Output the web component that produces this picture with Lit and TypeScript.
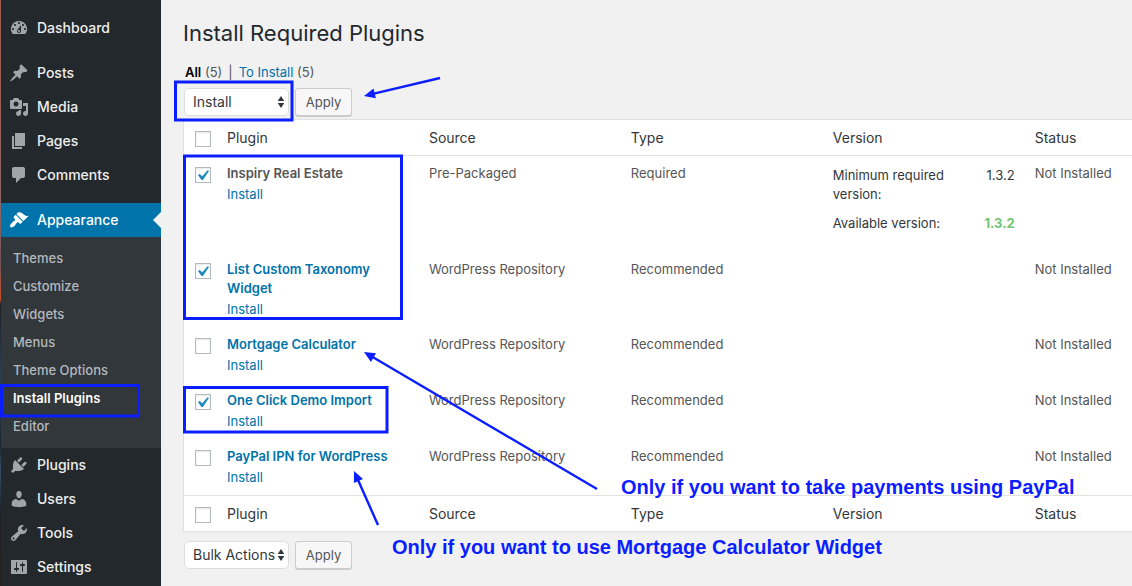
import { LitElement, html, css, svg, nothing } from "lit";
import { customElement, property } from "lit/decorators.js";

const ICONS: Record<string, string> = {
  dashboard:
    "M3.76 16h12.48A7.998 7.998 0 0 0 10 3a7.998 7.998 0 0 0-6.24 13zM10 4c.55 0 1 .45 1 1s-.45 1-1 1-1-.45-1-1 .45-1 1-1zM6 6c.55 0 1 .45 1 1s-.45 1-1 1-1-.45-1-1 .45-1 1-1zm8 0c.55 0 1 .45 1 1s-.45 1-1 1-1-.45-1-1 .45-1 1-1zm-5.37 5.55L12 7v6c0 1.1-.9 2-2 2s-2-.9-2-2c0-.57.24-1.08.63-1.45zM4 10c.55 0 1 .45 1 1s-.45 1-1 1-1-.45-1-1 .45-1 1-1zm12 0c.55 0 1 .45 1 1s-.45 1-1 1-1-.45-1-1 .45-1 1-1zm-5 3c0-.55-.45-1-1-1s-1 .45-1 1 .45 1 1 1 1-.45 1-1z",
  post: "M10.44 3.02l1.82-1.82 6.36 6.35-1.83 1.82c-1.05-.68-2.48-.57-3.41.36l-.75.75c-.92.93-1.04 2.35-.35 3.41l-1.83 1.82-2.41-2.41-2.8 2.79c-.42.42-3.38 2.71-3.8 2.29s1.86-3.39 2.28-3.81l2.79-2.79L4.1 9.36l1.83-1.82c1.05.69 2.48.57 3.4-.36l.75-.75c.93-.92 1.05-2.35.36-3.41z",
  media:
    "M13 11V4c0-.55-.45-1-1-1h-1.67L9 1H5L3.67 3H2c-.55 0-1 .45-1 1v7c0 .55.45 1 1 1h10c.55 0 1-.45 1-1zM7 4.5c1.38 0 2.5 1.12 2.5 2.5S8.38 9.5 7 9.5 4.5 8.38 4.5 7 5.62 4.5 7 4.5zM14 6h5v10.5c0 1.38-1.12 2.5-2.5 2.5S14 17.88 14 16.5s1.12-2.5 2.5-2.5c.17 0 .34.02.5.05V9h-3V6zm-4 8.05V13h2v3.5c0 1.38-1.12 2.5-2.5 2.5S7 17.88 7 16.5 8.12 14 9.5 14c.17 0 .34.02.5.05z",
  page: "M6 15V2h10v13H6zm-1 1h8v2H3V5h2v11z",
  comment:
    "M5 2h9c1.1 0 2 .9 2 2v7c0 1.1-.9 2-2 2h-2l-5 5v-5H5c-1.1 0-2-.9-2-2V4c0-1.1.9-2 2-2z",
  appearance:
    "M14.48 11.06L7.41 3.99l1.5-1.5c.5-.56 2.3-.47 3.51.32 1.21.8 1.43 1.28 2.91 2.1 1.18.64 2.45 1.26 4.45.85zm-.71.71L6.7 4.7 4.93 6.47c-.39.39-.39 1.02 0 1.41l1.06 1.06c.39.39.39 1.03 0 1.42-.6.6-1.43 1.11-2.21 1.69-.35.26-.7.53-1.01.84C1.43 14.23.4 16.08 1.4 17.07c.99 1 2.84-.03 4.18-1.36.31-.31.58-.66.85-1.02.57-.78 1.08-1.61 1.69-2.21.39-.39 1.02-.39 1.41 0l1.06 1.06c.39.39 1.02.39 1.41 0z",
  plugin:
    "M13.11 4.36L9.87 7.6 8 5.73l3.24-3.24c.35-.34 1.05-.2 1.56.32.52.51.66 1.21.31 1.55zm-8 1.77l.91-1.12 9.01 9.01-1.19.84c-.71.71-2.63 1.16-3.82 1.16H6.14L4.9 17.26c-.59.59-1.54.59-2.12 0-.59-.58-.59-1.53 0-2.12l1.24-1.24v-3.88c0-1.13.4-3.19 1.09-3.89zm7.26 3.97l3.24-3.24c.34-.35 1.04-.21 1.55.31.52.51.66 1.21.31 1.55l-3.24 3.25z",
  user: "M10 9.25c-2.27 0-2.73-3.44-2.73-3.44C7 4.02 7.82 2 9.97 2c2.16 0 2.98 2.02 2.71 3.81 0 0-.41 3.44-2.68 3.44zm0 2.57L12.72 10c2.39 0 4.52 2.33 4.52 4.53v2.49s-3.65 1.13-7.24 1.13c-3.65 0-7.24-1.13-7.24-1.13v-2.49c0-2.25 1.94-4.48 4.47-4.48z",
  tools:
    "M16.68 9.77c-1.34 1.34-3.3 1.67-4.95.99l-5.41 6.52c-.99.99-2.59.99-3.58 0s-.99-2.59 0-3.57l6.52-5.42c-.68-1.65-.35-3.61.99-4.95 1.28-1.28 3.12-1.62 4.72-1.06l-2.89 2.89 2.82 2.82 2.86-2.87c.53 1.58.18 3.39-1.08 4.65zM3.81 16.21c.4.39 1.04.39 1.43 0 .4-.4.4-1.04 0-1.43-.39-.4-1.03-.4-1.43 0-.39.39-.39 1.03 0 1.43z",
  settings:
    "M18 16V4c0-.55-.45-1-1-1H3c-.55 0-1 .45-1 1v12c0 .55.45 1 1 1h14c.55 0 1-.45 1-1zM8 11h1c.55 0 1 .45 1 1s-.45 1-1 1H8v1.5c0 .28-.22.5-.5.5s-.5-.22-.5-.5V13H6c-.55 0-1-.45-1-1s.45-1 1-1h1V5.5c0-.28.22-.5.5-.5s.5.22.5.5V11zm5-2h-1c-.55 0-1-.45-1-1s.45-1 1-1h1V5.5c0-.28.22-.5.5-.5s.5.22.5.5V7h1c.55 0 1 .45 1 1s-.45 1-1 1h-1v5.5c0 .28-.22.5-.5.5s-.5-.22-.5-.5V9z",
};

interface MenuItem {
  icon: string;
  label: string;
  current?: boolean;
  children?: string[];
}

const MENU: MenuItem[][] = [
  [{ icon: "dashboard", label: "Dashboard" }],
  [
    { icon: "post", label: "Posts" },
    { icon: "media", label: "Media" },
    { icon: "page", label: "Pages" },
    { icon: "comment", label: "Comments" },
  ],
  [
    {
      icon: "appearance",
      label: "Appearance",
      current: true,
      children: ["Themes", "Customize", "Widgets", "Menus", "Theme Options", "Install Plugins", "Editor"],
    },
    { icon: "plugin", label: "Plugins" },
    { icon: "user", label: "Users" },
    { icon: "tools", label: "Tools" },
    { icon: "settings", label: "Settings" },
  ],
];

const ACTIVE_CHILD = "Install Plugins";

interface Plugin {
  name: string;
  linked: boolean;
  checked: boolean;
  source: string;
  type: string;
  minimum?: string;
  available?: string;
  status: string;
}

const PLUGINS: Plugin[] = [
  {
    name: "Inspiry Real Estate",
    linked: false,
    checked: true,
    source: "Pre-Packaged",
    type: "Required",
    minimum: "1.3.2",
    available: "1.3.2",
    status: "Not Installed",
  },
  { name: "List Custom Taxonomy Widget", linked: true, checked: true, source: "WordPress Repository", type: "Recommended", status: "Not Installed" },
  { name: "Mortgage Calculator", linked: true, checked: false, source: "WordPress Repository", type: "Recommended", status: "Not Installed" },
  { name: "One Click Demo Import", linked: true, checked: true, source: "WordPress Repository", type: "Recommended", status: "Not Installed" },
  { name: "PayPal IPN for WordPress", linked: true, checked: false, source: "WordPress Repository", type: "Recommended", status: "Not Installed" },
];

@customElement("admin-menu")
export class AdminMenu extends LitElement {
  static styles = css`
    :host {
      display: block;
      background: #23282d;
    }
    .menu {
      display: flex;
      flex-direction: column;
      gap: 11px;
      padding-top: 11px;
    }
    .list {
      list-style: none;
      margin: 0;
      padding: 0;
    }
    .link {
      display: flex;
      align-items: center;
      gap: 8px;
      height: 34px;
      padding-left: 8px;
      color: #eee;
      font-size: 14px;
      font-weight: 500;
      line-height: 18px;
      text-decoration: none;
    }
    .icon {
      width: 20px;
      height: 20px;
      fill: #a0a5aa;
    }
    .current {
      position: relative;
      background: #0073aa;
      color: #fff;
    }
    .current .icon {
      fill: #fff;
    }
    .current::after {
      content: "";
      position: absolute;
      right: 0;
      top: 9px;
      border: 8px solid transparent;
      border-left-width: 0;
      border-right-color: #f1f1f1;
    }
    .submenu {
      list-style: none;
      margin: 0;
      padding: 7px 0 8px;
      background: #32373c;
    }
    .sublink {
      display: block;
      padding-left: 12px;
      line-height: 28px;
      color: #b4b9be;
      font-size: 13px;
      font-weight: 500;
      text-decoration: none;
    }
    .active {
      color: #fff;
      font-weight: 600;
    }
  `;

  private item(m: MenuItem) {
    return html`<li>
      <a class="link ${m.current ? "current" : ""}" href="#">
        <svg class="icon" viewBox="0 0 20 20" aria-hidden="true"><path fill-rule="evenodd" d=${ICONS[m.icon]}></path></svg>
        <span>${m.label}</span>
      </a>
      ${m.children
        ? html`<ul class="submenu">
            ${m.children.map(
              (c) => html`<li><a class="sublink ${c === ACTIVE_CHILD ? "active" : ""}" href="#">${c}</a></li>`
            )}
          </ul>`
        : nothing}
    </li>`;
  }

  render() {
    return html`<nav class="menu" aria-label="Main menu">
      ${MENU.map((group) => html`<ul class="list">${group.map((m) => this.item(m))}</ul>`)}
    </nav>`;
  }
}

@customElement("bulk-actions")
export class BulkActions extends LitElement {
  @property() selected = "Bulk Actions";

  static styles = css`
    :host {
      display: block;
    }
    .bar {
      display: flex;
      gap: 6px;
    }
    .field {
      display: grid;
      align-items: center;
    }
    .select {
      grid-area: 1 / 1;
      appearance: none;
      width: 105px;
      height: 28px;
      margin: 0;
      padding: 0 8px 2px;
      border: 1px solid #ddd;
      border-radius: 5px;
      background: #fff;
      color: #32373c;
      font: 14px Inter, "Liberation Sans", sans-serif;
    }
    .arrows {
      grid-area: 1 / 1;
      justify-self: end;
      width: 8px;
      height: 12px;
      margin-right: 4px;
      fill: #32373c;
      pointer-events: none;
    }
    .apply {
      height: 28px;
      width: 57px;
      margin: 0;
      padding: 0;
      border: 1px solid #ccc;
      border-radius: 3px;
      background: #f7f7f7;
      box-shadow: 0 1px 0 #ccc;
      color: #555;
      font: 13px Inter, "Liberation Sans", sans-serif;
    }
  `;

  render() {
    return html`<div class="bar">
      <div class="field">
        <select class="select" aria-label="Select bulk action">
          ${["Bulk Actions", "Install"].map(
            (o) => html`<option ?selected=${o === this.selected}>${o}</option>`
          )}
        </select>
        <svg class="arrows" viewBox="0 0 8 12" aria-hidden="true"><path d="M4 0l3.3 5H.7zM4 12L.7 7h6.6z"></path></svg>
      </div>
      <button class="apply" type="button">Apply</button>
    </div>`;
  }
}

@customElement("plugin-table")
export class PluginTable extends LitElement {
  static styles = css`
    :host {
      display: block;
    }
    .table {
      width: 100%;
      table-layout: fixed;
      border-spacing: 0;
      border: 1px solid #e1e1e1;
      border-right: 0;
      background: #fff;
      color: #555;
      font-size: 13px;
      line-height: 19px;
    }
    .col-check {
      width: 33px;
    }
    .col {
      width: 21.3%;
    }
    .head {
      padding: 8px 10px;
      color: #32373c;
      font-size: 14px;
      font-weight: 400;
      text-align: left;
    }
    .head-row .head {
      border-bottom: 1px solid #e1e1e1;
    }
    .foot-row .head {
      border-top: 1px solid #e1e1e1;
    }
    .cell {
      padding: 8px 10px;
      vertical-align: top;
      white-space: nowrap;
    }
    .check {
      padding: 11px 0 0 11px;
      vertical-align: top;
      line-height: 0;
    }
    .box {
      appearance: none;
      width: 16px;
      height: 16px;
      margin: 0;
      border: 1px solid #b4b9be;
      background: #fff;
      box-shadow: inset 0 1px 2px rgba(0, 0, 0, 0.1);
    }
    .box:checked {
      background: #fff
        url("data:image/svg+xml,%3Csvg xmlns='http://www.w3.org/2000/svg' viewBox='0 0 20 20'%3E%3Cpath fill='%231e8cbe' d='M14.83 4.89l1.34.94-5.81 8.38H9.02L5.78 9.67l1.34-1.25 2.57 2.4z'/%3E%3C/svg%3E") -4px -3px /
        21px 21px no-repeat;
    }
    .name {
      display: block;
      font-weight: 600;
      white-space: normal;
    }
    .link {
      color: #0073aa;
      text-decoration: none;
    }
    .action {
      display: block;
      padding-top: 2px;
    }
    .versions {
      display: flex;
      flex-direction: column;
      gap: 10px;
      margin: 0;
      padding: 2px 0 11px;
      color: #32373c;
      white-space: normal;
    }
    .version {
      display: flex;
      justify-content: space-between;
      gap: 24px;
    }
    .number {
      margin: 0;
    }
    .good {
      color: #71c671;
      font-weight: 700;
    }
  `;

  private headings(cls: string) {
    return html`<tr class=${cls}>
      <td class="head check"><input class="box" type="checkbox" aria-label="Select all" /></td>
      ${["Plugin", "Source", "Type", "Version", "Status"].map((h) => html`<th class="head" scope="col">${h}</th>`)}
    </tr>`;
  }

  private row(p: Plugin) {
    return html`<tr>
      <td class="check"><input class="box" type="checkbox" aria-label="Select ${p.name}" ?checked=${p.checked} /></td>
      <td class="cell">
        <span class="name">${p.linked ? html`<a class="link" href="#">${p.name}</a>` : p.name}</span>
        <span class="action"><a class="link" href="#">Install</a></span>
      </td>
      <td class="cell">${p.source}</td>
      <td class="cell">${p.type}</td>
      <td class="cell">
        ${p.minimum
          ? html`<dl class="versions">
              <div class="version"><dt>Minimum required version:</dt><dd class="number">${p.minimum}</dd></div>
              <div class="version"><dt>Available version:</dt><dd class="number good">${p.available}</dd></div>
            </dl>`
          : nothing}
      </td>
      <td class="cell">${p.status}</td>
    </tr>`;
  }

  render() {
    return html`<table class="table">
      <colgroup>
        <col class="col-check" />
        <col class="col" /><col class="col" /><col class="col" /><col class="col" />
        <col />
      </colgroup>
      <thead>${this.headings("head-row")}</thead>
      <tbody>${PLUGINS.map((p) => this.row(p))}</tbody>
      <tfoot>${this.headings("foot-row")}</tfoot>
    </table>`;
  }
}

/* Tutorial mark-up drawn over the screen: frames, arrows and notes. */
@customElement("tutorial-notes")
export class TutorialNotes extends LitElement {
  static styles = css`
    :host {
      position: absolute;
      inset: 0;
      overflow: hidden;
      pointer-events: none;
    }
    .marks {
      position: absolute;
      left: 0;
      top: 0;
      width: 1132px;
      height: 586px;
      fill: none;
      stroke: #0b1eff;
    }
    .note {
      position: absolute;
      margin: 0;
      color: #0b1eff;
      font: bold 20px/24px "Liberation Sans", Arial, sans-serif;
      white-space: nowrap;
    }
    .paypal {
      left: 621px;
      top: 475px;
    }
    .mortgage {
      left: 392px;
      top: 535px;
    }
  `;

  render() {
    const frames = [
      [175.5, 82, 116.5, 38],
      [184.5, 156, 217, 162.5],
      [184.5, 387.5, 202.5, 44.5],
      [1.5, 385.5, 137, 30.5],
    ];
    const arrows = [
      [440, 78, 364, 96],
      [597, 489, 364, 352],
      [378, 525, 354, 471],
    ];
    return html`
      <svg class="marks" viewBox="0 0 1132 586" aria-hidden="true">
        ${frames.map(([x, y, w, h]) => svg`<rect x=${x} y=${y} width=${w} height=${h} stroke-width="3"></rect>`)}
        ${arrows.map(([x1, y1, x2, y2]) => {
          const len = Math.hypot(x2 - x1, y2 - y1);
          const angle = (Math.atan2(y2 - y1, x2 - x1) * 180) / Math.PI;
          return svg`<g transform="translate(${x1} ${y1}) rotate(${angle})">
            <path d="M0 0H${len - 8}" stroke-width="2.4"></path>
            <path d="M${len} 0l-11 -5v10z" fill="#0b1eff" stroke="none"></path>
          </g>`;
        })}
      </svg>
      <p class="note paypal">Only if you want to take payments using PayPal</p>
      <p class="note mortgage">Only if you want to use Mortgage Calculator Widget</p>
    `;
  }
}

@customElement("app-root")
export class AppRoot extends LitElement {
  static styles = css`
    :host {
      position: relative;
      display: grid;
      grid-template-columns: 1px 160px minmax(0, 1fr);
      min-height: 100vh;
      background: #f1f1f1;
      color: #444;
      font: 13px/19px Inter, "Liberation Sans", sans-serif;
    }
    .edge {
      background: linear-gradient(#a3584c, #8f6663 35%, #74535a 45%, #c4502a 51%, #1c2026 52%, #2b4157 65%, #1c2530 76%, #35506b 80%, #1c2026 88%, #2a1f1e);
    }
    .content {
      padding: 17px 0 17px 22px;
    }
    .title {
      margin: 0;
      color: #23282d;
      font-size: 22px;
      font-weight: 400;
      line-height: 33px;
    }
    .filters {
      display: flex;
      gap: 6px;
      list-style: none;
      margin: 13px 0 6px;
      padding: 0 0 0 2px;
      color: #555;
    }
    .filter {
      color: #0073aa;
      text-decoration: none;
    }
    .chosen {
      color: #000;
      font-weight: 600;
    }
    .bulk {
      padding-left: 1px;
    }
    .rows {
      margin: 3px 0 9px;
    }
  `;

  render() {
    return html`
      <div class="edge"></div>
      <admin-menu></admin-menu>
      <main class="content">
        <h1 class="title">Install Required Plugins</h1>
        <ul class="filters">
          <li><a class="filter chosen" href="#">All</a> (5)</li>
          <li>|</li>
          <li><a class="filter" href="#">To Install</a> (5)</li>
        </ul>
        <bulk-actions class="bulk" selected="Install"></bulk-actions>
        <plugin-table class="rows"></plugin-table>
        <bulk-actions class="bulk"></bulk-actions>
      </main>
      <tutorial-notes></tutorial-notes>
    `;
  }
}
